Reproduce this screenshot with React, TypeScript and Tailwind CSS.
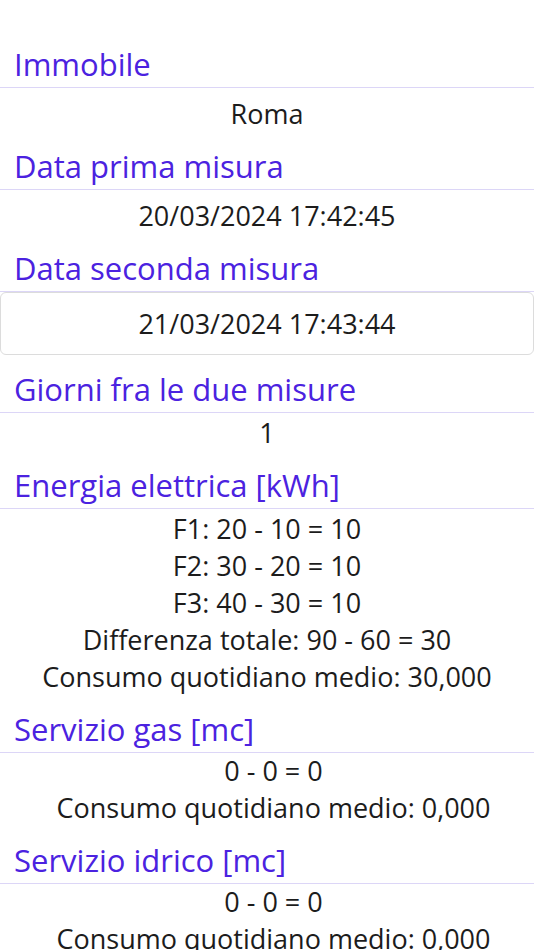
const Header = ({ title }: { title: string }) => (
  <div className="h-[45px] border-b border-[#dcd6f7] pl-[14px] text-[31px] leading-[43px] text-[#4b22e0]">
    {title}
  </div>
)

const Lines = ({ lines, className = 'pt-px' }: { lines: string[]; className?: string }) => (
  <div className={`text-center text-[27px] leading-[37px] text-[#1c1c1c] ${className}`}>
    {lines.map((l, i) => (
      <div key={i}>{l}</div>
    ))}
  </div>
)

const Section = ({ title, children }: { title: string; children: React.ReactNode }) => (
  <section className="mb-[13px]">
    <Header title={title} />
    {children}
  </section>
)

export default function App() {
  return (
    <div className="min-h-screen overflow-hidden bg-white pt-[43px] font-['Open_Sans',sans-serif]">
      <Section title="Immobile">
        <Lines lines={['Roma']} className="pt-[7px]" />
      </Section>

      <Section title="Data prima misura">
        <Lines lines={['20/03/2024 17:42:45']} className="pt-[7px]" />
      </Section>

      <Section title="Data seconda misura">
        <div className="rounded-md border border-[#dcdcdc] py-3 text-center text-[27px] leading-[37px] text-[#1c1c1c]">
          21/03/2024 17:43:44
        </div>
      </Section>

      <Section title="Giorni fra le due misure">
        <Lines lines={['1']} />
      </Section>

      <Section title="Energia elettrica [kWh]">
        <Lines
          lines={[
            'F1: 20 - 10 = 10',
            'F2: 30 - 20 = 10',
            'F3: 40 - 30 = 10',
            'Differenza totale: 90 - 60 = 30',
            'Consumo quotidiano medio: 30,000',
          ]}
        />
      </Section>

      <Section title="Servizio gas [mc]">
        <Lines lines={['0 - 0 = 0', 'Consumo quotidiano medio: 0,000']} className="-mt-px pl-[13px]" />
      </Section>

      <Section title="Servizio idrico [mc]">
        <Lines lines={['0 - 0 = 0', 'Consumo quotidiano medio: 0,000']} className="-mt-px pl-[13px]" />
      </Section>
    </div>
  )
}
